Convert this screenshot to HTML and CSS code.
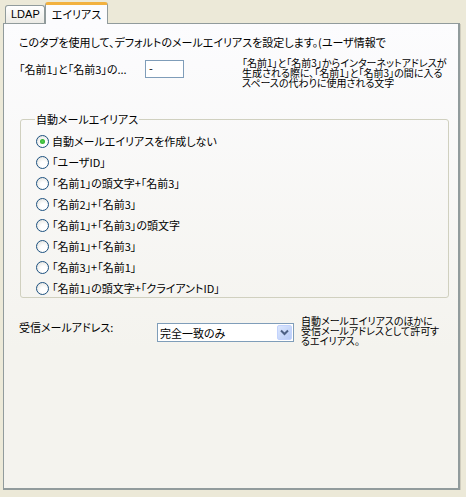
FILE: index.html
```html
<!DOCTYPE html>
<html lang="ja">
<head>
<meta charset="utf-8">
<link rel="stylesheet" href="styles.css">
</head>
<body>
<div class="window">
  <div class="tabs">
    <div class="tab">LDAP</div>
    <div class="tab active">エイリアス</div>
  </div>
  <div class="panel">
    <div class="intro">このタブを使用して、デフォルトのメールエイリアスを設定します。(ユーザ情報で</div>
    <div class="sep-row">
      <div class="sep-label">「名前1」と「名前3」の...</div>
      <div class="sep-input">-</div>
      <div class="sep-desc">「名前1」と「名前3」からインターネットアドレスが<br>生成される際に、「名前1」と「名前3」の間に入る<br>スペースの代わりに使用される文字</div>
    </div>
    <fieldset class="group">
      <legend>自動メールエイリアス</legend>
      <div class="radios">
        <label class="radio"><span class="dot checked"></span>自動メールエイリアスを作成しない</label>
        <label class="radio"><span class="dot"></span>「ユーザID」</label>
        <label class="radio"><span class="dot"></span>「名前1」の頭文字+「名前3」</label>
        <label class="radio"><span class="dot"></span>「名前2」+「名前3」</label>
        <label class="radio"><span class="dot"></span>「名前1」+「名前3」の頭文字</label>
        <label class="radio"><span class="dot"></span>「名前1」+「名前3」</label>
        <label class="radio"><span class="dot"></span>「名前3」+「名前1」</label>
        <label class="radio"><span class="dot"></span>「名前1」の頭文字+「クライアントID」</label>
      </div>
    </fieldset>
    <div class="recv-row">
      <div class="recv-label">受信メールアドレス:</div>
      <div class="select">
        <span class="select-text">完全一致のみ</span>
        <span class="select-btn"><svg width="9" height="7" viewBox="0 0 9 7"><path d="M1 1.5 L4.5 5 L8 1.5" fill="none" stroke="#4d6185" stroke-width="2"/></svg></span>
      </div>
      <div class="recv-desc">自動メールエイリアスのほかに<br>受信メールアドレスとして許可す<br>るエイリアス。</div>
    </div>
  </div>
</div>
</body>
</html>
```

FILE: styles.css
```css
html, body {
  margin: 0;
  padding: 0;
  background: #ECE9D8;
}
body {
  font-family: "Noto Sans CJK JP", "Noto Sans", sans-serif;
  font-size: 11px;
  color: #000;
  font-feature-settings: "palt";
}
.window {
  padding: 1px 6px 0 3px;
  width: 457px;
}
.tabs {
  display: flex;
  align-items: flex-end;
  height: 22px;
  padding-left: 2px;
}
.tab {
  box-sizing: border-box;
  height: 18px;
  padding: 0 4px 0 5px;
  line-height: 16px;
  border: 1px solid #919B9C;
  border-bottom: none;
  border-radius: 3px 3px 0 0;
  background: linear-gradient(#FFFFFF, #ECEBE6);
  font-family: "Liberation Sans", "Noto Sans CJK JP", sans-serif;
  font-size: 11px;
}
.tab.active {
  height: 22px;
  margin-bottom: -1px;
  padding: 0 6px;
  background: #FCFCFE;
  border-top: 3px solid #F2B13F;
  position: relative;
  z-index: 1;
  font-family: "Noto Sans CJK JP", sans-serif;
  font-size: 11px;
  line-height: 18px;
}
.panel {
  box-sizing: border-box;
  height: 467px;
  border: 1px solid #919B9C;
  border-right: 2px solid #919B9C;
  border-bottom: 2px solid #919B9C;
  background: linear-gradient(#FCFCFE, #F4F3EE 70%, #F4F3EE);
  padding: 11px 0 0 15px;
  box-shadow: 1px 1px 0 #D0CDBE;
}
.intro {
  line-height: 14px;
  white-space: nowrap;
}
.sep-row {
  display: flex;
  align-items: flex-start;
  margin-top: 7px;
}
.sep-label {
  width: 126px;
  margin-top: 6px;
  line-height: 14px;
}
.sep-input {
  box-sizing: border-box;
  width: 39px;
  height: 18px;
  margin-top: 4px;
  border: 1px solid #7F9DB9;
  background: #fff;
  padding-left: 3px;
  line-height: 14px;
}
.sep-desc {
  margin-left: 58px;
  line-height: 10px;
  font-size: 10px;
  white-space: nowrap;
  margin-top: 2px;
}
.group {
  box-sizing: border-box;
  width: 429px;
  height: 186px;
  margin: 24px 0 0 1px;
  padding: 8px 0 0 15px;
  border: 1px solid #D0D0BF;
  border-radius: 3px;
}
.group legend {
  padding: 0 1px;
  margin-left: -1px;
  line-height: 14px;
}
.radios {
  display: flex;
  flex-direction: column;
  gap: 7px;
}
.radio {
  display: flex;
  align-items: center;
  gap: 3px;
  line-height: 14px;
}
.dot {
  box-sizing: border-box;
  width: 13px;
  height: 13px;
  border: 1px solid #1C5180;
  border-radius: 50%;
  background: radial-gradient(circle at 60% 65%, #FFFFFF 30%, #DCDCD6 100%);
  display: flex;
  align-items: center;
  justify-content: center;
}
.dot.checked::after {
  content: "";
  width: 5px;
  height: 5px;
  border-radius: 50%;
  background: radial-gradient(circle, #55D351, #21A121);
}
.recv-row {
  display: flex;
  align-items: flex-start;
  margin-top: 17px;
}
.recv-label {
  width: 138px;
  margin-top: 5px;
  line-height: 14px;
}
.select {
  box-sizing: border-box;
  width: 137px;
  height: 19px;
  margin-top: 8px;
  border: 1px solid #7F9DB9;
  background: #fff;
  display: flex;
  align-items: center;
  justify-content: space-between;
  padding: 0 1px 0 2px;
}
.select-text {
  line-height: 14px;
}
.select-btn {
  box-sizing: border-box;
  width: 15px;
  height: 15px;
  border-radius: 2px;
  background: linear-gradient(135deg, #DCE7FE, #B7CBF7);
  border: 1px solid #C3D3FD;
  display: flex;
  align-items: center;
  justify-content: center;
}
.recv-desc {
  margin-left: 7px;
  line-height: 10px;
  font-size: 10px;
  white-space: nowrap;
  margin-top: 1px;
}
```
